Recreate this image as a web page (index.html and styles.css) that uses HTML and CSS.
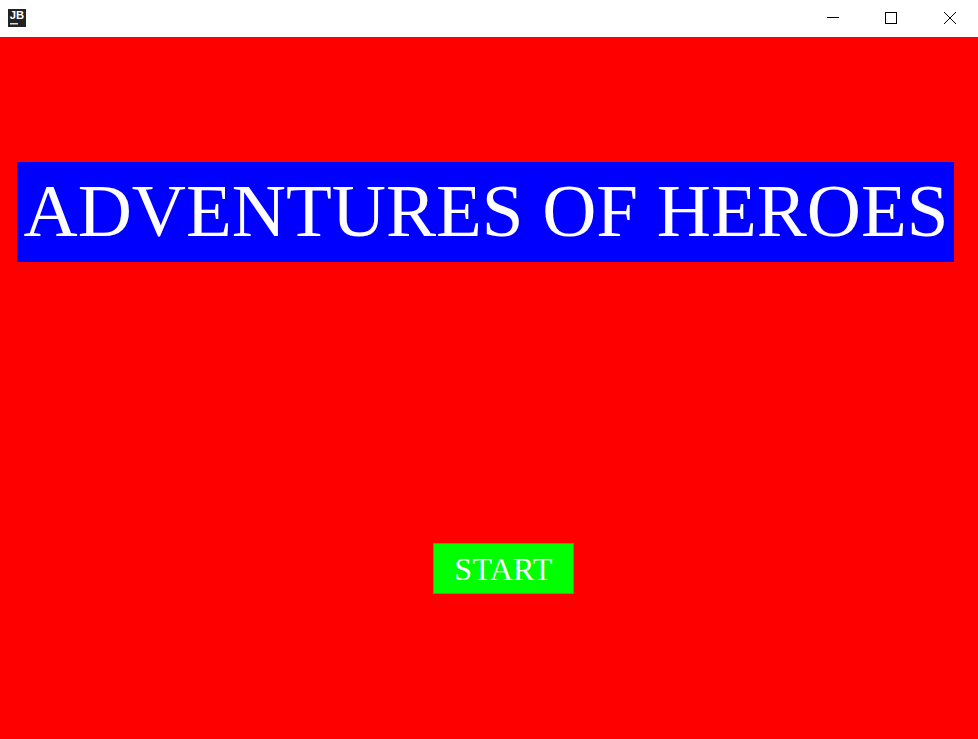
FILE: index.html
```html
<!DOCTYPE html>
<html lang="en">
<head>
<meta charset="utf-8">
<title>Adventures of Heroes</title>
<link rel="stylesheet" href="styles.css">
</head>
<body>
<header class="titlebar">
  <svg class="app-icon" width="18" height="18" viewBox="0 0 18 18">
    <rect width="18" height="18" fill="#222"/>
    <text class="logo-text" x="1.8" y="10" textLength="14.4" lengthAdjust="spacingAndGlyphs">JB</text>
    <rect x="2" y="14" width="8" height="1.5" fill="#ddd"/>
  </svg>
  <nav class="controls">
    <button class="control" aria-label="Minimize"><svg width="12" height="12"><path d="M0 5.5H12"/></svg></button>
    <button class="control" aria-label="Maximize"><svg width="12" height="12"><path d="M.5.5H11.5V11.5H.5Z"/></svg></button>
    <button class="control" aria-label="Close"><svg width="12" height="12"><path class="smooth" d="M0 0L12 12M12 0L0 12"/></svg></button>
  </nav>
</header>
<main class="screen">
  <h1 class="title">ADVENTURES OF HEROES</h1>
  <button class="start">START</button>
</main>
</body>
</html>
```

FILE: styles.css
```css
body {
  margin: 0;
  height: 739px;
  display: flex;
  flex-direction: column;
  overflow: hidden;
}
.titlebar {
  box-sizing: border-box;
  height: 37px;
  display: flex;
  align-items: center;
  justify-content: space-between;
  padding: 0 0 1px 8px;
  background: #fff;
}
.logo-text {
  font: bold 10.5px "Liberation Sans", sans-serif;
  fill: #fff;
}
.controls {
  display: flex;
  margin-right: -1px;
}
.control {
  width: 58.5px;
  height: 36px;
  padding: 0;
  border: 0;
  background: none;
  display: flex;
  align-items: center;
  justify-content: center;
}
.control path {
  fill: none;
  stroke: #000;
  stroke-width: 1;
  shape-rendering: crispEdges;
}
.control .smooth { shape-rendering: auto; }
.screen {
  flex: 1;
  display: flex;
  flex-direction: column;
  background: #f00;
}
.title, .start {
  box-sizing: border-box;
  padding: 0;
  border: 0;
  color: #fff;
  font-family: "Liberation Serif", serif;
  font-weight: 400;
  text-align: center;
  white-space: nowrap;
}
.title {
  width: 937px;
  height: 100px;
  margin: 125px 0 0 17px;
  padding-left: 1px;
  background: #00f;
  font-size: 75px;
  line-height: 97px;
}
.start {
  width: 141px;
  height: 51px;
  margin: 281px 0 0 433px;
  padding-top: 2px;
  border: 1px solid #7f7f50;
  background: #0f0;
  font-size: 32px;
  line-height: 47px;
  letter-spacing: 0.3px;
}
```
